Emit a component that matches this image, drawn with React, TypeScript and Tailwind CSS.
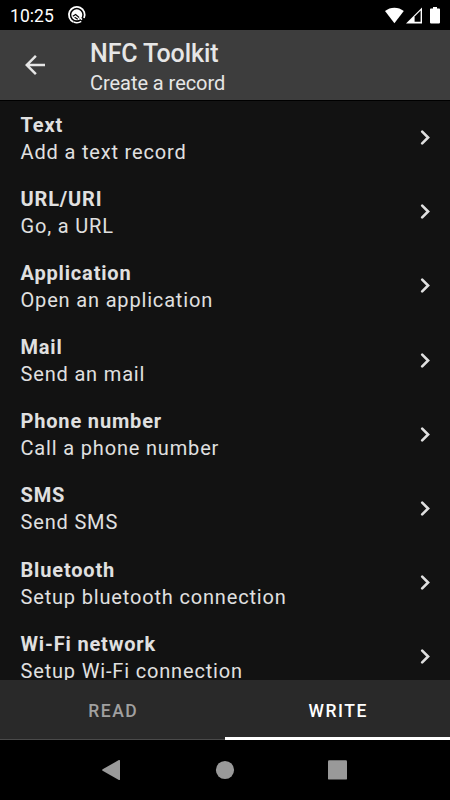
import { useState } from "react";

interface RecordType {
    title: string;
    description: string;
}

const records: RecordType[] = [
    { title: "Text", description: "Add a text record" },
    { title: "URL/URI", description: "Go, a URL" },
    { title: "Application", description: "Open an application" },
    { title: "Mail", description: "Send an mail" },
    { title: "Phone number", description: "Call a phone number" },
    { title: "SMS", description: "Send SMS" },
    { title: "Bluetooth", description: "Setup bluetooth connection" },
    { title: "Wi-Fi network", description: "Setup Wi-Fi connection" },
];

const StatusBar = () => (
    <div className="flex h-[30px] shrink-0 items-center bg-black pl-[10px] pr-[10px] text-white">
        <span className="w-[57px] pt-[3px] text-[17.5px] leading-none tracking-[0.05px]">10:25</span>
        <svg width="20" height="20" viewBox="0 0 20 20" fill="none" stroke="white">
            <path d="M6.4 16.9A7.9 7.9 0 1 1 17 13" strokeWidth="1.8" />
            <path d="M6.6 17a8 8 0 0 0 7.6-.6" strokeWidth="1.7" />
            <circle cx="9.8" cy="9.8" r="5.5" fill="white" stroke="none" />
            <path d="M5.8 11.2l2.8-1.6 4.6 3.8M7.6 12.2l3.2 2" stroke="black" strokeWidth="1.2" />
            <path d="M12.4 12.2l2.6 2.4" strokeWidth="1.5" />
        </svg>
        <div className="ml-auto flex items-center">
            <svg width="19" height="17" viewBox="0 0 19 17" fill="white">
                <path d="M9.4 16.2L0 4.1C5.3-.5 13.5-.5 18.8 4.1z" />
            </svg>
            <svg className="ml-[2px]" width="16" height="17" viewBox="0 0 16 17">
                <path d="M0 16.4L16 .4v16z" fill="white" />
                <path d="M8.6 9.6L14.6 3.6v11.2H8.6z" fill="black" />
            </svg>
            <svg className="ml-[8px]" width="10" height="17" viewBox="0 0 10 17" fill="white">
                <path d="M3 0h4v1.6H9.2q.8 0 .8.8v13.2q0 .8-.8.8H.8q-.8 0-.8-.8V2.4q0-.8.8-.8H3z" />
            </svg>
        </div>
    </div>
);

const Header = () => (
    <header className="flex h-[70px] shrink-0 items-center bg-[#3d3d3d] text-[#e6e6e6]">
        <button className="flex w-[90px] pl-[25px]" aria-label="Back">
            <svg width="20" height="20" viewBox="4 4 16 16" fill="currentColor">
                <path d="M20 11H7.83l5.59-5.59L12 4l-8 8 8 8 1.41-1.41L7.83 13H20v-2z" />
            </svg>
        </button>
        <div className="pt-[5px]">
            <h1 className="text-[25px] font-medium leading-[31px] tracking-[-0.1px]">NFC Toolkit</h1>
            <p className="text-[20px] leading-[29px] tracking-[-0.05px]">Create a record</p>
        </div>
    </header>
);

const RecordRow = ({ title, description }: RecordType) => (
    <li className="flex h-[74.17px] items-center justify-between pl-[20.5px] pr-[20px]">
        <div className="pt-[1px] tracking-[0.83px]">
            <h2 className="text-[20px] font-bold leading-[27px]">{title}</h2>
            <p className="text-[20px] leading-[27px]">{description}</p>
        </div>
        <svg width="10" height="16" viewBox="0 0 10 16" fill="none" stroke="currentColor" strokeWidth="2.6">
            <path d="M2.2 1.6l5.9 5.9-5.9 5.9" strokeLinecap="round" />
        </svg>
    </li>
);

const App = () => {
    const [tab, setTab] = useState("WRITE");

    return (
        <div className="flex h-[800px] w-[450px] flex-col overflow-hidden bg-black font-['Roboto',sans-serif]">
            <StatusBar />
            <Header />
            <ul className="min-h-0 flex-1 overflow-hidden border-t border-black bg-[#121212] text-[#e0e0e0]">
                {records.map((record) => (
                    <RecordRow key={record.title} {...record} />
                ))}
            </ul>
            <nav className="flex h-[60px] shrink-0 bg-[#292929]">
                {["READ", "WRITE"].map((name) => (
                    <button
                        key={name}
                        onClick={() => setTab(name)}
                        className={`flex-1 pl-[1.5px] text-[17.5px] font-medium tracking-[1.56px] ${
                            tab === name
                                ? "border-b-[3px] border-white pt-[6px] text-white"
                                : "border-b border-[#4a4a4a] pt-[4px] text-[#a0a0a0]"
                        }`}
                    >
                        {name}
                    </button>
                ))}
            </nav>
            <div className="flex h-[60px] shrink-0 items-center justify-center bg-black">
                <svg width="254" height="24" viewBox="0 0 254 24" fill="#999999">
                    <path d="M4.6 11.2L20.9 2.1q1.1-.5 1.1.7v18.4q0 1.2-1.1.7L4.6 12.8q-1-.8 0-1.6z" />
                    <circle cx="127" cy="12" r="9.1" />
                    <rect x="230" y="2.2" width="19" height="19.4" rx="1.2" />
                </svg>
            </div>
        </div>
    );
};

export default App;
